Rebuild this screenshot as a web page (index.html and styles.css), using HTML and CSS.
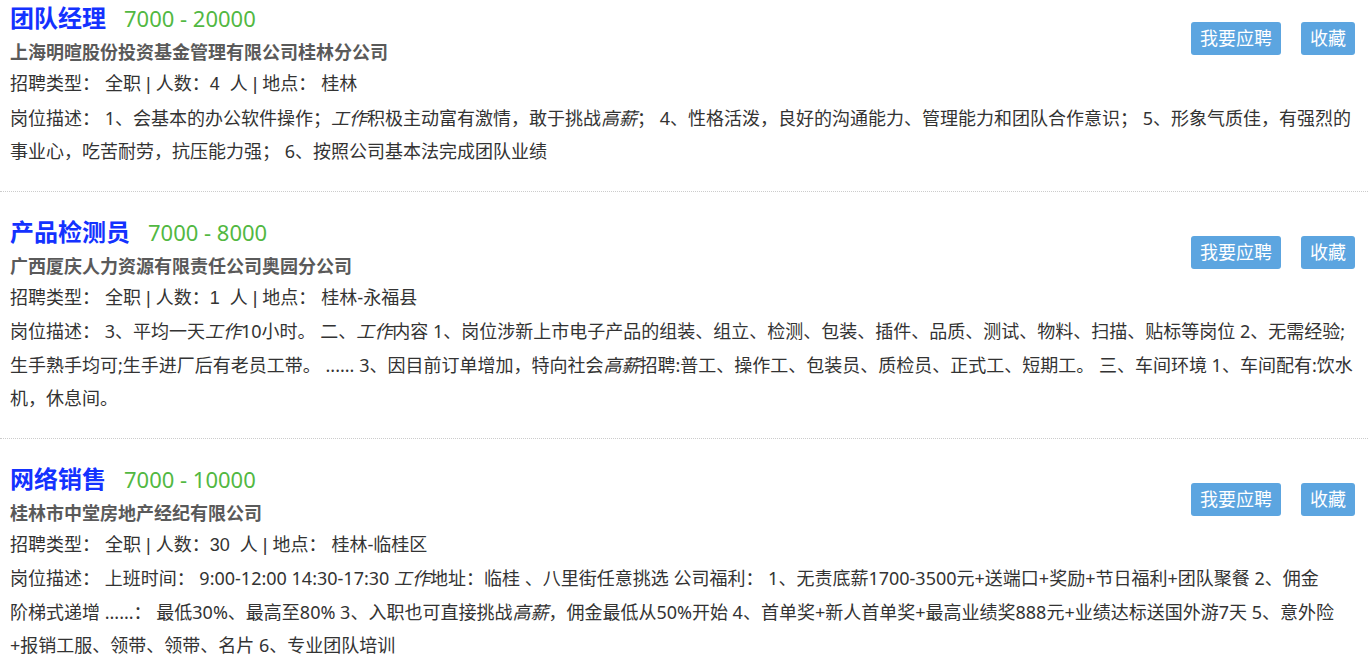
FILE: index.html
```html
<!DOCTYPE html>
<html lang="zh-CN">
<head>
    <meta charset="UTF-8">
    <meta name="viewport" content="width=device-width, initial-scale=1.0">
    <title>职位列表</title>
    <link rel="stylesheet" href="styles.css">
</head>
<body>
    <div class="job-list">
        <div class="job">
            <div class="job-head">
                <div class="job-info">
                    <h2 class="job-title">团队经理<span class="salary">7000 - 20000</span></h2>
                    <p class="company">上海明暄股份投资基金管理有限公司桂林分公司</p>
                </div>
                <div class="actions">
                    <button class="btn">我要应聘</button>
                    <button class="btn">收藏</button>
                </div>
            </div>
            <p class="meta">招聘类型： 全职 | 人数：4&nbsp; 人 | 地点： 桂林</p>
            <p class="desc">岗位描述： 1、会基本的办公软件操作；<em>工作</em>积极主动富有激情，敢于挑战<em>高薪</em>； 4、性格活泼，良好的沟通能力、管理能力和团队合作意识； 5、形象气质佳，有强烈的事业心，吃苦耐劳，抗压能力强； 6、按照公司基本法完成团队业绩</p>
        </div>

        <div class="job">
            <div class="job-head">
                <div class="job-info">
                    <h2 class="job-title">产品检测员<span class="salary">7000 - 8000</span></h2>
                    <p class="company">广西厦庆人力资源有限责任公司奥园分公司</p>
                </div>
                <div class="actions">
                    <button class="btn">我要应聘</button>
                    <button class="btn">收藏</button>
                </div>
            </div>
            <p class="meta">招聘类型： 全职 | 人数：1&nbsp; 人 | 地点： 桂林-永福县</p>
            <p class="desc">岗位描述： 3、平均一天<em>工作</em>10小时。 二、<em>工作</em>内容 1、岗位涉新上市电子产品的组装、组立、检测、包装、插件、品质、测试、物料、扫描、贴标等岗位 2、无需经验;生手熟手均可;生手进厂后有老员工带。 ...... 3、因目前订单增加，特向社会<em>高薪</em>招聘:普工、操作工、包装员、质检员、正式工、短期工。 三、车间环境 1、车间配有:饮水机，休息间。</p>
        </div>

        <div class="job">
            <div class="job-head">
                <div class="job-info">
                    <h2 class="job-title">网络销售<span class="salary">7000 - 10000</span></h2>
                    <p class="company">桂林市中堂房地产经纪有限公司</p>
                </div>
                <div class="actions">
                    <button class="btn">我要应聘</button>
                    <button class="btn">收藏</button>
                </div>
            </div>
            <p class="meta">招聘类型： 全职 | 人数：30&nbsp; 人 | 地点： 桂林-临桂区</p>
            <p class="desc">岗位描述： 上班时间： 9:00-12:00 14:30-17:30 <em>工作</em>地址：临桂 、八里街任意挑选 公司福利： 1、无责底薪1700-3500元+送端口+奖励+节日福利+团队聚餐 2、佣金<br>阶梯式递增 ......： 最低30%、最高至80% 3、入职也可直接挑战<em>高薪</em>，佣金最低从50%开始 4、首单奖+新人首单奖+最高业绩奖888元+业绩达标送国外游7天 5、意外险<br>+报销工服、领带、领带、名片 6、专业团队培训</p>
        </div>
    </div>
</body>
</html>
```

FILE: styles.css
```css
body {
    margin: 0;
    font-family: "Noto Sans", "Noto Sans CJK SC", sans-serif;
    color: #333;
    background: #fff;
}
.job {
    padding: 22px 13px 22px 10px;
    border-bottom: 1px dotted #ccc;
}
.job:first-child {
    padding-top: 0;
}
.job-head {
    display: flex;
    justify-content: space-between;
    align-items: flex-start;
}
.job-title {
    margin: 0;
    font-size: 24px;
    line-height: 36px;
    font-weight: bold;
    color: #1432ff;
}
.salary {
    margin-left: 18px;
    font-size: 22px;
    font-weight: normal;
    color: #52b842;
}
.company {
    margin: 0;
    font-size: 18px;
    line-height: 32px;
    font-weight: bold;
    color: #5a5a5a;
}
.actions {
    display: flex;
    gap: 20px;
    margin-top: 22px;
}
.btn {
    height: 33px;
    padding: 0 9px;
    border: none;
    border-radius: 3px;
    background-color: #5ca5e0;
    color: #fff;
    font-family: inherit;
    font-size: 18px;
    line-height: 33px;
    cursor: pointer;
}
.meta,
.desc {
    margin: 0;
    font-size: 18px;
    line-height: 33.5px;
}
.meta {
    font-family: "Liberation Sans", "Noto Sans CJK SC", sans-serif;
}
.desc em {
    font-style: italic;
}
```
